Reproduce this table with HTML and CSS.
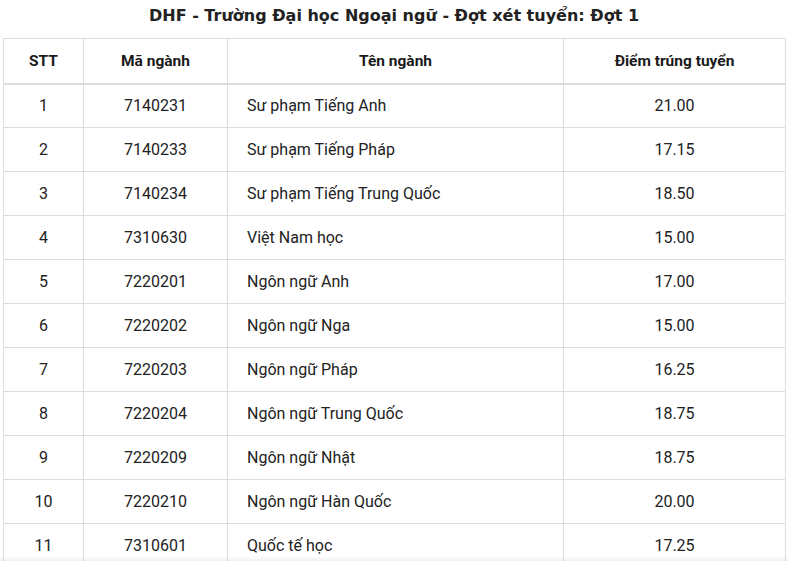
FILE: index.html
```html
<!DOCTYPE html>
<html lang="vi">
<head>
<meta charset="utf-8">
<title>DHF - Điểm trúng tuyển</title>
<link rel="stylesheet" href="styles.css">
</head>
<body>
<div class="page">
  <h1 class="title">DHF - Trường Đại học Ngoại ngữ - Đợt xét tuyển: Đợt 1</h1>
  <table class="scores">
    <colgroup>
      <col class="c-stt"><col class="c-ma"><col class="c-ten"><col class="c-diem">
    </colgroup>
    <thead>
      <tr><th>STT</th><th>Mã ngành</th><th>Tên ngành</th><th>Điểm trúng tuyển</th></tr>
    </thead>
    <tbody>
      <tr><td>1</td><td>7140231</td><td class="name">Sư phạm Tiếng Anh</td><td>21.00</td></tr>
      <tr><td>2</td><td>7140233</td><td class="name">Sư phạm Tiếng Pháp</td><td>17.15</td></tr>
      <tr><td>3</td><td>7140234</td><td class="name">Sư phạm Tiếng Trung Quốc</td><td>18.50</td></tr>
      <tr><td>4</td><td>7310630</td><td class="name">Việt Nam học</td><td>15.00</td></tr>
      <tr><td>5</td><td>7220201</td><td class="name">Ngôn ngữ Anh</td><td>17.00</td></tr>
      <tr><td>6</td><td>7220202</td><td class="name">Ngôn ngữ Nga</td><td>15.00</td></tr>
      <tr><td>7</td><td>7220203</td><td class="name">Ngôn ngữ Pháp</td><td>16.25</td></tr>
      <tr><td>8</td><td>7220204</td><td class="name">Ngôn ngữ Trung Quốc</td><td>18.75</td></tr>
      <tr><td>9</td><td>7220209</td><td class="name">Ngôn ngữ Nhật</td><td>18.75</td></tr>
      <tr><td>10</td><td>7220210</td><td class="name">Ngôn ngữ Hàn Quốc</td><td>20.00</td></tr>
      <tr><td>11</td><td>7310601</td><td class="name">Quốc tế học</td><td>17.25</td></tr>
    </tbody>
  </table>
</div>
</body>
</html>
```

FILE: styles.css
```css
html, body {
  margin: 0;
  padding: 0;
  background: #fff;
}
body::after {
  content: "";
  position: fixed;
  left: 0;
  right: 0;
  bottom: 0;
  height: 5px;
  background: linear-gradient(to bottom, rgba(0,0,0,0), rgba(0,0,0,0.06));
  pointer-events: none;
}
.page {
  padding: 0 3px;
  width: 782px;
}
.title {
  margin: 0 0 13px 0;
  padding-top: 6px;
  font-family: "DejaVu Sans", Verdana, sans-serif;
  font-weight: bold;
  font-size: 16px;
  line-height: 19px;
  color: #222;
  text-align: center;
}
.scores {
  width: 782px;
  border-collapse: collapse;
  table-layout: fixed;
  font-family: Roboto, "Liberation Sans", sans-serif;
  font-size: 16px;
  color: #222;
}
.c-stt { width: 80px; }
.c-ma { width: 144px; }
.c-ten { width: 336px; }
.c-diem { width: 222px; }
.scores th,
.scores td {
  border: 1px solid #ddd;
  height: 44px;
  padding: 0 8px;
  box-sizing: border-box;
  text-align: center;
  vertical-align: middle;
}
.scores th {
  font-weight: bold;
  font-size: 15.5px;
  color: #1a1a1a;
  border-bottom: 2px solid #ddd;
  height: 45px;
}
.scores td.name {
  text-align: left;
  padding-left: 19px;
}
```
